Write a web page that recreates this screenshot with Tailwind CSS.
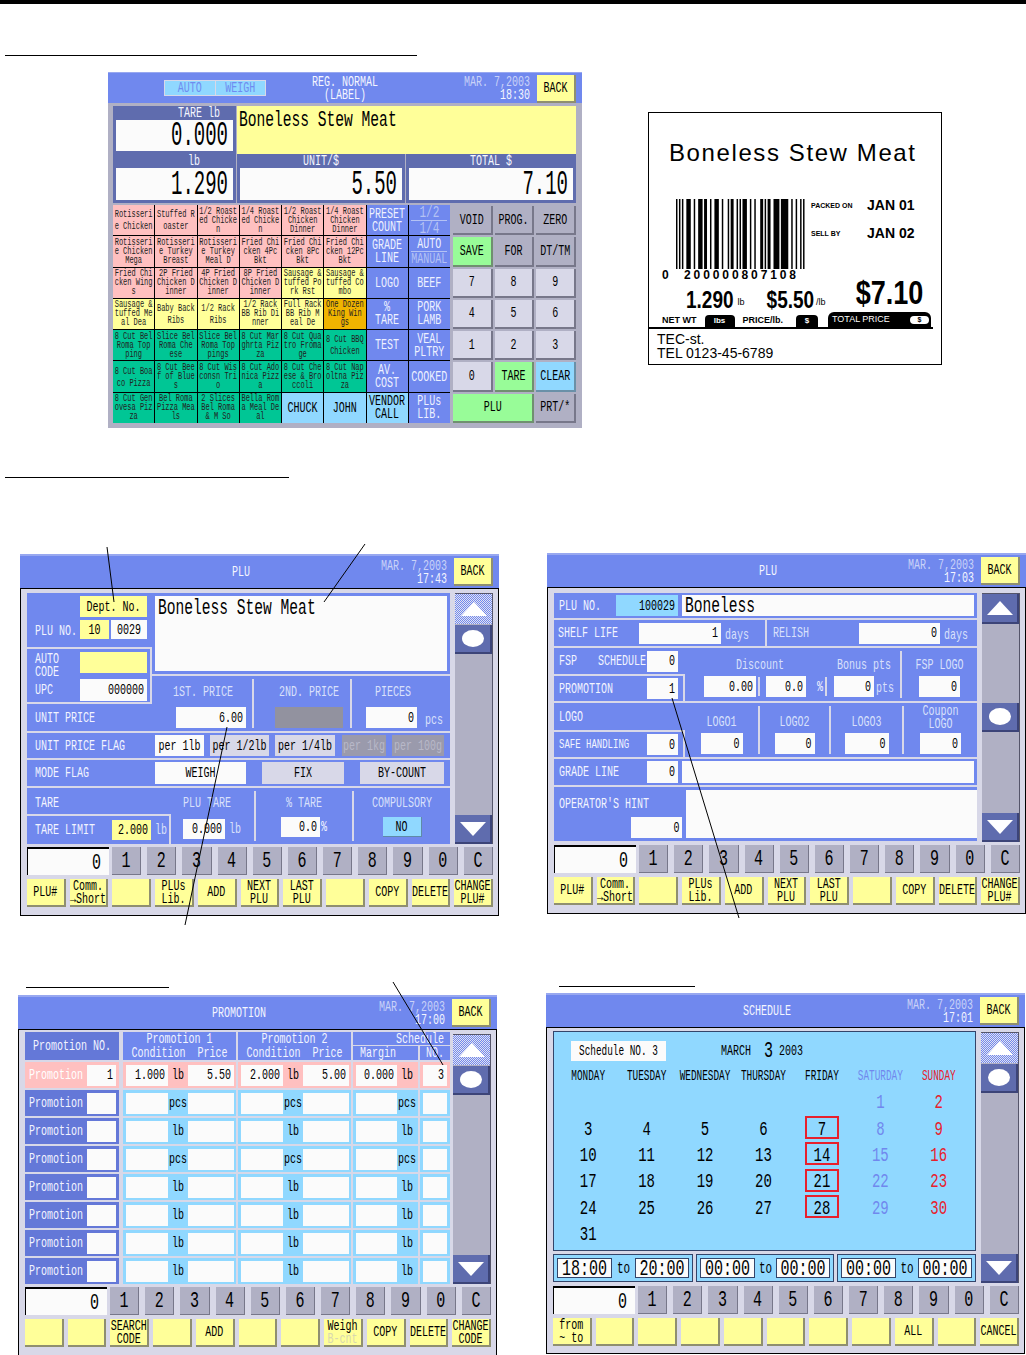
<!DOCTYPE html>
<html lang="en">
<head>
    <meta charset="UTF-8">
    <title>Scale screens</title>
    <script src="https://cdn.jsdelivr.net/npm/@tailwindcss/browser@4"></script>
</head>
<body class="bg-white">
    <div id="page" class="relative w-[1026px] h-[1355px] overflow-hidden bg-white text-black font-['Liberation_Mono',monospace] text-[10px] leading-none">
        <div class="h-1 bg-black"></div>
        <div class="mt-[51px] ml-[5px] w-[412px] h-px bg-black"></div>

        <!-- registration screen + printed label -->
        <div class="mt-4 flex items-start">
            <div id="regScreen" class="ml-[108px] w-[474px] h-[356px] bg-[#b0b0c4]"></div>
            <div id="label" class="ml-[66px] mt-10 w-[294px] h-[253px] border border-black bg-white font-['Liberation_Sans',sans-serif]"></div>
        </div>

        <div class="mt-[49px] ml-[5px] w-[284px] h-px bg-black"></div>

        <div class="mt-[76px] flex items-start">
            <div id="plu1" class="ml-5"></div>
            <div id="plu2" class="ml-[48px] -mt-px"></div>
        </div>

        <div class="mt-[70px] flex items-start">
            <div class="ml-[18px] w-[479px]">
                <div class="mt-px ml-2 w-[143px] h-px bg-black"></div>
                <div id="promo" class="mt-[7px]"></div>
            </div>
            <div class="ml-[49px] w-[478px]">
                <div class="ml-[13px] w-[136px] h-px bg-black"></div>
                <div id="sched" class="mt-[6px]"></div>
            </div>
        </div>

        <!-- leader lines over the screens -->
        <svg class="absolute left-0 top-0 pointer-events-none" width="1026" height="1355" fill="none" stroke="#000" stroke-width="1">
            <path d="M107 547L114 602M365 544L324 602M227 727L185 925M672 698L739 918M393 982L443 1065"/>
        </svg>
    </div>

    <script>
        // text helper: the scale font is tall and narrow, so stretch the mono glyphs
        const L = (s, c = '') => `<span class="inline-block whitespace-pre scale-y-150 translate-y-px ${c}">${s}</span>`;

        const keyYellow = 'bg-[#ffff99] border-[#8f8f70] text-black';
        const keyGray = 'bg-[#b0b0c4] border-[#77778a]';
        const keyLight = 'bg-[#d8d8e8] border-[#77778a]';
        const keyGreen = 'bg-[#98fc98] border-[#708f70]';
        const keyBlue = 'bg-[#90d8ff] border-[#6a90a8]';

        const key = (label, c) => `<div class="flex flex-col items-center justify-center gap-[3px] border-r-2 border-b-2 ${c}">${label.split('|').map(l => L(l)).join('')}</div>`;
        const field = (txt, c) => `<div class="flex items-center justify-end pr-[3px] bg-[#fbfbfb] ${c}">${L(txt)}</div>`;
        const divider = '<div class="w-[2px] self-stretch bg-[#d8d8e8]"></div>';

        const triUp = '<svg width="26" height="14"><polygon points="13,0 26,14 0,14" fill="#fff"/></svg>';
        const triDown = '<svg width="26" height="14"><polygon points="0,0 26,0 13,14" fill="#fff"/></svg>';
        const dot = '<svg width="22" height="17"><ellipse cx="11" cy="8.5" rx="11" ry="8.5" fill="#fff"/></svg>';
        const hatched = 'bg-[repeating-conic-gradient(#7088ee_0_25%,#e4e4f0_0_50%)] bg-[length:2px_2px]';
        const solid = 'bg-[#5f6cae] border-r-2 border-b-2 border-[#3c4478]';

        function scrollbar(upHatched, dotLow) {
            return `<div class="w-[38px] flex flex-col bg-[#b0b0c4] border-t border-r border-[#55556a]">
                <div class="h-[30px] flex items-center justify-center ${upHatched ? hatched : solid}">${triUp}</div>
                ${dotLow ? '<div class="h-[79px]"></div>' : '<div class="h-px"></div>'}
                <div class="h-[29px] flex items-center justify-center ${solid}">${dot}</div>
                <div class="flex-1"></div>
                <div class="h-[29px] flex items-center justify-center ${solid}">${triDown}</div>
            </div>`;
        }

        function numpad() {
            const digits = ['1', '2', '3', '4', '5', '6', '7', '8', '9', '0', 'C'];
            return `<div class="mt-[3px] flex h-[28px]">
                <div class="w-[82px] flex items-center justify-end pr-2 bg-[#fbfbfb] border-l border-t-2 border-black text-[15px]">${L('0', 'scale-y-125')}</div>
                <div class="ml-[3px] w-[381px] grid grid-cols-11 gap-[6px] text-[15px]">
                    ${digits.map(d => `<div class="flex items-center justify-center ${keyGray} border-r border-b">${L(d, 'scale-y-125')}</div>`).join('')}
                </div>
            </div>`;
        }

        function fkeys(labels) {
            return `<div class="mt-1 h-[28px] w-[466px] grid grid-cols-11 gap-1">
                ${labels.map(l => key(l, keyYellow)).join('')}
            </div>`;
        }

        function screen(title, time, main, upHatched, dotLow, labels, h, bodyPad, mainH) {
            return `<div class="w-[479px] ${h} flex flex-col bg-[#d8d8e8] border-b border-l border-r border-black">
                <div class="-ml-px -mr-px h-[35px] shrink-0 flex items-center bg-[#7088ee] border-b border-black border-t-2 border-t-[#98a8f0] text-[#f4f6ff]">
                    <div class="w-[330px] pl-[112px] text-center">${L(title)}</div>
                    <div class="w-[97px] text-right leading-[13px]"><span class="text-[#c9d2f8]">${L('MAR. 7,2003')}</span><br>${L(time)}</div>
                    <div class="ml-[7px] w-[39px] h-[28px]">${key('BACK', keyYellow + ' h-full')}</div>
                </div>
                <div class="pl-[6px] ${bodyPad}">
                    <div class="flex ${mainH}">
                        <div class="w-[423px] shrink-0">${main}</div>
                        <div class="ml-[5px] flex">${scrollbar(upHatched, dotLow)}</div>
                    </div>
                    ${numpad()}
                    ${fkeys(labels)}
                </div>
            </div>`;
        }

        // ---------- registration screen ----------
        const cellBg = {
            p: 'bg-[#ffc0c0]', y: 'bg-[#ffff99]', o: 'bg-[#f0b400]', g: 'bg-[#00c695]'
        };
        const regCells = [
            ['p', 'Rotisseri|e Chicken'], ['p', 'Stuffed R|oaster'], ['p', '1/2 Roast|ed Chicke|n'], ['p', '1/4 Roast|ed Chicke|n'], ['p', '1/2 Roast|Chicken|Dinner'], ['p', '1/4 Roast|Chicken|Dinner'],
            ['p', 'Rotisseri|e Chicken|Mega'], ['p', 'Rotisseri|e Turkey|Breast'], ['p', 'Rotisseri|e Turkey|Meal D'], ['p', 'Fried Chi|cken 4Pc|Bkt'], ['p', 'Fried Chi|cken 8Pc|Bkt'], ['p', 'Fried Chi|cken 12Pc|Bkt'],
            ['p', 'Fried Chi|cken Wing|s'], ['p', '2P Fried|Chicken D|inner'], ['p', '4P Fried|Chicken D|inner'], ['p', '8P Fried|Chicken D|inner'], ['y', 'Sausage &|tuffed Po|rk Rst'], ['y', 'Sausage &|tuffed Co|mbo'],
            ['y', 'Sausage &|tuffed Me|al Dea'], ['y', 'Baby Back|Ribs'], ['y', '1/2 Rack|Ribs'], ['y', '1/2 Rack|BB Rib Di|nner'], ['y', 'Full Rack|BB Rib M|eal De'], ['o', 'One Dozen|King Win|gs'],
            ['g', '8 Cut Bel|Roma Top|ping'], ['g', 'Slice Bel|Roma Che|ese'], ['g', 'Slice Bel|Roma Top|pings'], ['g', '8 Cut Mar|ghrta Piz|za'], ['g', '8 Cut Qua|tro Froma|ge'], ['g', '8 Cut BBQ|Chicken'],
            ['g', '8 Cut Boa|co Pizza'], ['g', '8 Cut Bee|f of Blue|s'], ['g', '8 Cut Wis|consn Tri|o'], ['g', '8 Cut Ado|nica Pizz|a'], ['g', '8 Cut Che|ese & Bro|ccoli'], ['g', '8 Cut Nap|oltna Piz|za'],
            ['g', '8 Cut Gen|ovesa Piz|za'], ['g', 'Bel Roma|Pizza Mea|ls'], ['g', '2 Slices|Bel Roma|& M So'], ['g', 'Bella Rom|a Meal De|al']
        ];
        const sideBlue = [
            ['PRESET|COUNT', '1/2|1/4'], ['GRADE|LINE', 'AUTO|MANUAL'], ['LOGO', 'BEEF'], ['%|TARE', 'PORK|LAMB'],
            ['TEST', 'VEAL|PLTRY'], ['AV.|COST', 'COOKED'], ['VENDOR|CALL', 'PLUs|LIB.']
        ];

        function regCell([bg, text]) {
            const lines = text.split('|');
            const pitch = lines.length === 3 ? 'leading-[9px]' : 'leading-[12px]';
            return `<div class="${cellBg[bg]} ${pitch} flex flex-col items-center justify-center text-[7px] text-[#222] overflow-hidden">${lines.map(l => `<span class="inline-block whitespace-pre scale-y-150">${l}</span>`).join('')}</div>`;
        }
        function blueCell(text, dim) {
            const lines = text.split('|');
            const color = dim ? 'text-[#b4c2f4]' : 'text-[#eef1ff]';
            return `<div class="bg-[#7088ee] flex flex-col items-center justify-center gap-[3px] ${color}">${lines.map(l => L(l)).join('')}</div>`;
        }
        function regGrid() {
            let html = '';
            for (let r = 0; r < 7; r++) {
                const cells = regCells.slice(r * 6, r * 6 + 6);
                html += cells.map(regCell).join('');
                if (r === 6) {
                    html += `<div class="bg-[#90d8ff] flex items-center justify-center">${L('CHUCK')}</div><div class="bg-[#90d8ff] flex items-center justify-center">${L('JOHN')}</div>`;
                    html += `<div class="bg-[#90d8ff] flex flex-col items-center justify-center gap-[3px]">${L('VENDOR')}${L('CALL')}</div>`;
                    html += blueCell(sideBlue[r][1]);
                } else {
                    html += blueCell(sideBlue[r][0]);
                    if (r === 0) {
                        html += `<div class="bg-[#7088ee] flex flex-col items-center justify-center text-[#b4c2f4] text-[11px]">${L('1/2', 'scale-y-125')}<div class="w-9 h-px bg-[#b4c2f4] my-[2px]"></div>${L('1/4', 'scale-y-125')}</div>`;
                    } else if (r === 1) {
                        html += `<div class="bg-[#7088ee] flex flex-col items-center justify-center text-[#eef1ff]">${L('AUTO')}<div class="w-9 h-px bg-[#b4c2f4] my-[2px]"></div>${L('MANUAL', 'text-[#b4c2f4]')}</div>`;
                    } else {
                        html += blueCell(sideBlue[r][1]);
                    }
                }
            }
            return html;
        }

        function bigBox(title, value, w, titleClass) {
            return `<div class="${w} flex flex-col bg-[#5f6cae] px-[3px] pb-[3px]">
                <div class="h-[14px] shrink-0 flex items-center text-[#f4f6ff] text-[10px] ${titleClass}">${L(title, 'scale-y-125')}</div>
                <div class="flex-1 bg-[#fbfbfb] flex items-center justify-end pr-[5px] text-[19px]">${L(value, 'scale-y-[1.85]')}</div>
            </div>`;
        }

        function renderReg() {
            const keys = [
                ['VOID', keyGray], ['PROG.', keyGray], ['ZERO', keyGray],
                ['SAVE', keyGreen], ['FOR', keyGray], ['DT/TM', keyGray],
                ['7', keyLight], ['8', keyLight], ['9', keyLight],
                ['4', keyLight], ['5', keyLight], ['6', keyLight],
                ['1', keyLight], ['2', keyLight], ['3', keyLight],
                ['0', keyLight], ['TARE', keyGreen], ['CLEAR', keyBlue]
            ];
            document.getElementById('regScreen').innerHTML = `
                <div class="h-[31px] flex items-center bg-[#7088ee] border-t border-[#98a8f0] pl-14 text-[#f4f6ff]">
                    <div class="w-[102px] h-4 flex text-[#6f8cf0] bg-[#90d8ff] border border-[#d8d8e8]">
                        <div class="flex-1 flex items-center justify-center border-r border-[#d8d8e8]">${L('AUTO')}</div>
                        <div class="flex-1 flex items-center justify-center">${L('WEIGH')}</div>
                    </div>
                    <div class="w-[158px] text-center leading-[13px]">${L('REG. NORMAL')}<br>${L('(LABEL)')}</div>
                    <div class="w-[106px] text-right leading-[13px]"><span class="text-[#c9d2f8]">${L('MAR. 7,2003')}</span><br>${L('18:30')}</div>
                    <div class="ml-[7px] w-[39px] h-[28px] mt-[2px]">${key('BACK', keyYellow + ' h-full')}</div>
                </div>
                <div class="pl-[5px] pt-[3px]">
                    <div class="flex h-[48px]">
                        ${bigBox('TARE lb', '0.000', 'w-[123px]', 'pl-[62px]')}
                        <div class="ml-px w-[339px] bg-[#ffff99] pl-[2px] pt-[6px] text-[14.6px] h-[48px]">${L('Boneless Stew Meat', 'scale-y-[1.45]')}</div>
                    </div>
                    <div class="flex h-[49px] gap-px">
                        ${bigBox('lb', '1.290', 'w-[123px]', 'pl-[72px]')}
                        ${bigBox('UNIT/$', '5.50', 'w-[168px]', 'justify-center')}
                        ${bigBox('TOTAL $', '7.10', 'w-[170px]', 'justify-center')}
                    </div>
                    <div class="mt-[2px] flex h-[218px]">
                        <div class="w-[337px] grid grid-cols-8 grid-rows-7 gap-px bg-black">${regGrid()}</div>
                        <div class="ml-[3px] w-[123px] pt-px grid grid-cols-3 grid-rows-7 gap-x-[2px] gap-y-[2px]">
                            ${keys.map(k => key(k[0], k[1])).join('')}
                            <div class="col-span-2 grid">${key('PLU', keyGreen)}</div>
                            ${key('PRT/*', keyGray)}
                        </div>
                    </div>
                </div>`;
        }

        // ---------- printed label ----------
        function renderLabel() {
            const bars = [1,1,1,1,1,2,3,2,1,2,3,1,2,2,1,2,3,2,1,3,1,1,2,2,1,1,1,1,3,2,1,2,1,3,2,1,1,1,2,2,4,1,5,2,1,2,1,2,1,1,1,1];
            let x = 0, rects = '';
            for (let i = 0; i < bars.length; i += 2) {
                rects += `<rect x="${x}" y="0" width="${bars[i]}" height="70"/>`;
                x += bars[i] + bars[i + 1];
            }
            document.getElementById('label').innerHTML = `
                <div class="pt-[28px] pl-5 text-[24px] leading-[24px] tracking-[1.6px] whitespace-nowrap">Boneless Stew Meat</div>
                <div class="mt-[34px] flex">
                    <div class="ml-[27px] w-[130px]">
                        <svg width="130" height="70" viewBox="0 0 ${x} 70" preserveAspectRatio="none" fill="#000">${rects}</svg>
                    </div>
                    <div class="ml-[5px] w-[110px] flex flex-col gap-4">
                        <div class="flex items-center h-3"><span class="w-[56px] text-[7px] font-bold whitespace-nowrap">PACKED ON</span><span class="text-[14px] font-bold whitespace-nowrap">JAN 01</span></div>
                        <div class="flex items-center h-3"><span class="w-[56px] text-[7px] font-bold whitespace-nowrap">SELL BY</span><span class="text-[14px] font-bold whitespace-nowrap">JAN 02</span></div>
                    </div>
                </div>
                <div class="ml-[13px] text-[12px] font-bold tracking-[2.9px] leading-3 whitespace-pre">0  200000807108</div>
                <div class="flex items-end h-[34px] -mt-[3px]">
                    <span class="ml-[37px] text-[19px] font-bold leading-[24px] scale-y-125 inline-block">1.290</span>
                    <span class="ml-1 mb-[5px] text-[9px] leading-none">lb</span>
                    <span class="ml-[22px] text-[19px] font-bold leading-[24px] scale-y-125 inline-block">$5.50</span>
                    <span class="ml-[2px] mb-[5px] text-[9px] leading-none">/lb</span>
                    <span class="ml-[30px] text-[27px] font-bold leading-[38px] scale-y-125 inline-block">$7.10</span>
                </div>
                <div class="flex items-end h-[15px] ml-[13px]">
                    <span class="text-[9px] font-bold mb-[2px] whitespace-nowrap">NET WT</span>
                    <span class="ml-2 w-[30px] h-3 rounded-t bg-black text-white text-[8px] font-bold text-center leading-3">lbs</span>
                    <span class="ml-2 text-[9px] font-bold mb-[2px] whitespace-nowrap">PRICE/lb.</span>
                    <span class="ml-[13px] w-[22px] h-3 rounded-t bg-black text-white text-[8px] font-bold text-center leading-3">$</span>
                    <span class="ml-[10px] w-[103px] h-[15px] rounded-t-md bg-black text-white text-[9px] pl-1 flex items-center whitespace-nowrap">TOTAL PRICE<span class="ml-5 w-[19px] h-2 rounded-sm bg-white text-black text-[7px] font-bold text-center leading-2">$</span></span>
                </div>
                <div class="w-[284px] h-[2px] bg-black"></div>
                <div class="mt-[3px] pl-[8px] text-[14px] leading-[14px]">TEC-st.<br>TEL 0123-45-6789</div>`;
        }

        // ---------- PLU page 1 ----------
        const blue = 'bg-[#7088ee]';
        const panelText = 'text-[#f2f4ff]';
        function renderPlu1() {
            const main = `<div class="flex flex-col gap-[2px] ${panelText}">
                <div class="flex h-[138px]">
                    <div class="w-[125px] flex flex-col ${blue}">
                        <div class="h-[54px] flex pt-[3px] pl-2">
                            <div class="w-[45px] self-end pb-[11px]">${L('PLU NO.')}</div>
                            <div class="w-[67px] text-black">
                                <div class="h-[21px] bg-[#ffff99] flex items-center justify-center">${L('Dept. No.')}</div>
                                <div class="mt-[3px] flex gap-[2px]">
                                    <div class="w-[29px] h-[19px] bg-[#ffff99] flex items-center justify-center">${L('10')}</div>
                                    <div class="w-9 h-[19px] bg-[#fbfbfb] flex items-center justify-center">${L('0029')}</div>
                                </div>
                            </div>
                        </div>
                        <div class="h-[57px] flex border-y-2 border-r-2 border-[#d8d8e8] pl-2 pt-[3px]">
                            <div class="w-[45px] flex flex-col">
                                <div class="leading-[13px] h-[31px]">${L('AUTO')}<br>${L('CODE')}</div>
                                <div class="pt-[2px]">${L('UPC')}</div>
                            </div>
                            <div class="w-[67px]">
                                <div class="h-[21px] bg-[#ffff99]"></div>
                                <div class="mt-[6px] h-[22px] bg-[#fbfbfb] text-black flex items-center justify-end pr-[3px]">${L('000000')}</div>
                            </div>
                        </div>
                        <div class="flex-1 flex items-center pl-2">${L('UNIT PRICE')}</div>
                    </div>
                    <div class="w-[298px] flex flex-col bg-[#d8d8e8]">
                        <div class="h-[82px] p-[3px] ${blue}">
                            <div class="h-full bg-[#fbfbfb] text-black pl-[3px] pt-1 text-[14.6px]">${L('Boneless Stew Meat', 'scale-y-[1.45]')}</div>
                        </div>
                        <div class="mt-[2px] flex-1 flex ${blue} py-[3px]">
                            <div class="w-[100px] pl-[24px] flex flex-col">
                                <div class="h-[28px] pb-[3px] -ml-[8px] flex items-center justify-center w-[70px]">${L('1ST. PRICE', 'text-[#d9e0fb]')}</div>
                                ${field('6.00', 'w-[70px] h-[21px] text-black')}
                            </div>
                            ${divider}
                            <div class="w-[96px] pl-[21px] flex flex-col">
                                <div class="h-[28px] pb-[3px] flex items-center justify-center w-[68px]">${L('2ND. PRICE', 'text-[#d9e0fb]')}</div>
                                <div class="w-[68px] h-[21px] bg-[#92929f]"></div>
                            </div>
                            ${divider}
                            <div class="flex-1 pl-[14px] flex flex-col">
                                <div class="h-[28px] pb-[3px] flex items-center justify-center w-[51px] pl-[3px]">${L('PIECES', 'text-[#d9e0fb]')}</div>
                                <div class="flex items-end">
                                    ${field('0', 'w-[51px] h-[21px] text-black')}
                                    <span class="ml-2 mb-[3px]">${L('pcs', 'text-[#d9e0fb]')}</span>
                                </div>
                            </div>
                        </div>
                    </div>
                </div>
                <div class="h-[25px] flex items-center pl-2 ${blue}">
                    <div class="w-[120px]">${L('UNIT PRICE FLAG')}</div>
                    <div class="flex text-black h-[21px]">
                        <div class="w-[49px] bg-[#fbfbfb] flex items-center justify-center">${L('per 1lb')}</div>
                        <div class="ml-[6px] w-[59px] bg-[#d8d8e8] flex items-center justify-center">${L('per 1/2lb')}</div>
                        <div class="ml-[6px] w-[60px] bg-[#d8d8e8] flex items-center justify-center">${L('per 1/4lb')}</div>
                        <div class="ml-[7px] w-[44px] bg-[#9a9aac] text-[#b8b8c8] flex items-center justify-center">${L('per 1kg')}</div>
                        <div class="ml-[6px] w-[52px] bg-[#9a9aac] text-[#b8b8c8] flex items-center justify-center">${L('per 100g')}</div>
                    </div>
                </div>
                <div class="h-[26px] flex items-center pl-2 ${blue}">
                    <div class="w-[120px]">${L('MODE FLAG')}</div>
                    <div class="flex text-black h-[22px]">
                        <div class="w-[91px] bg-[#fbfbfb] flex items-center justify-center">${L('WEIGH')}</div>
                        <div class="ml-[7px]">${divider}</div>
                        <div class="ml-[7px] w-[82px] bg-[#d8d8e8] flex items-center justify-center">${L('FIX')}</div>
                        <div class="ml-[7px]">${divider}</div>
                        <div class="ml-[7px] w-[84px] bg-[#d8d8e8] flex items-center justify-center">${L('BY-COUNT')}</div>
                    </div>
                </div>
                <div class="h-[56px] flex ${blue}">
                    <div class="w-[227px] flex flex-col">
                        <div class="h-[26px] pt-[3px] flex items-center pl-2">
                            <div class="w-[148px]">${L('TARE')}</div>
                            ${L('PLU TARE', 'text-[#d9e0fb]')}
                        </div>
                        <div class="flex-1 flex items-center">
                            <div class="w-[144px] h-full flex items-center pl-2 border-t-2 border-r-2 border-[#d8d8e8]">
                                <div class="w-[77px]">${L('TARE LIMIT')}</div>
                                <div class="w-[39px] h-5 bg-[#ffff99] text-black flex items-center justify-end pr-[3px]">${L('2.000')}</div>
                                <span class="ml-1 text-[#d9e0fb]">${L('lb')}</span>
                            </div>
                            ${field('0.000', 'ml-3 w-[42px] h-5 text-black')}
                            <span class="ml-1 text-[#d9e0fb]">${L('lb')}</span>
                        </div>
                    </div>
                    <div class="my-[3px] flex">${divider}</div>
                    <div class="w-[96px] flex flex-col items-center">
                        <div class="h-[26px] pt-[3px] flex items-center">${L('% TARE', 'text-[#d9e0fb]')}</div>
                        <div class="flex items-center pt-[3px]">
                            ${field('0.0', 'w-[39px] h-5 text-black')}
                            <span class="ml-[1px]">${L('%')}</span>
                        </div>
                    </div>
                    <div class="my-[3px] flex">${divider}</div>
                    <div class="flex-1 flex flex-col items-center">
                        <div class="h-[26px] pt-[3px] flex items-center">${L('COMPULSORY', 'text-[#d9e0fb]')}</div>
                        <div class="mt-[3px] w-[39px] h-5 bg-[#90d8ff] text-black flex items-center justify-center border-r border-b border-[#5f8aa8]">${L('NO')}</div>
                    </div>
                </div>
            </div>`;
            document.getElementById('plu1').innerHTML = screen('PLU', '17:43', main, true, false,
                ['PLU#', 'Comm.|→Short', '', 'PLUs|Lib.', 'ADD', 'NEXT|PLU', 'LAST|PLU', '', 'COPY', 'DELETE', 'CHANGE|PLU#'], 'h-[362px]', 'pt-1', 'h-[251px]');
        }

        // ---------- PLU page 2 ----------
        function renderPlu2() {
            const f = (txt, c) => field(txt, c + ' text-black');
            const bar = '<div class="w-[2px] h-[19px] bg-[#d8d8e8]"></div>';
            const main = `<div class="flex flex-col gap-[2px] ${panelText}">
                <div class="h-[25px] flex items-center pl-[5px] ${blue}">
                    <div class="w-[57px]">${L('PLU NO.')}</div>
                    <div class="w-[62px] h-[21px] bg-[#90d8ff] text-black flex items-center justify-end pr-[3px]">${L('100029')}</div>
                    <div class="ml-1 w-[292px] h-[21px] bg-[#fbfbfb] text-black pl-[3px] pt-[3px] text-[14.6px]">${L('Boneless', 'scale-y-[1.45]')}</div>
                </div>
                <div class="h-[26px] flex gap-[2px]">
                    <div class="w-[211px] flex items-center pl-1 ${blue}">
                        <div class="w-[81px]">${L('SHELF LIFE')}</div>
                        ${f('1', 'w-[82px] h-[21px]')}
                        <span class="ml-[4px] pt-1">${L('days', 'text-[#d9e0fb]')}</span>
                    </div>
                    <div class="flex-1 flex items-center pl-[6px] ${blue}">
                        <div class="w-[80px]">${L('RELISH', 'text-[#d9e0fb]')}</div>
                        <div class="ml-[6px]">${f('0', 'w-[81px] h-[21px]')}</div>
                        <span class="ml-[4px] pt-1">${L('days', 'text-[#d9e0fb]')}</span>
                    </div>
                </div>
                <div class="h-[53px] flex ${blue}">
                    <div class="w-[131px] flex flex-col">
                        <div class="h-[26px] flex items-center pl-[5px]">
                            <div class="w-[39px]">${L('FSP')}</div>
                            <div class="w-[49px] overflow-visible">${L('SCHEDULE')}</div>
                            ${f('0', 'w-[31px] h-[21px]')}
                        </div>
                        <div class="flex-1 flex items-center pl-[5px] border-t-2 border-r-2 border-[#d8d8e8]">
                            <div class="w-[88px]">${L('PROMOTION')}</div>
                            ${f('1', 'w-[31px] h-[21px]')}
                        </div>
                    </div>
                    <div class="flex-1 flex">
                        <div class="w-[215px] flex flex-col">
                            <div class="h-[25px] flex items-end pb-[3px] text-[#d9e0fb]">
                                <div class="w-[150px] text-center">${L('Discount')}</div>
                                <div class="w-[58px] flex justify-center">${L('Bonus pts')}</div>
                            </div>
                            <div class="flex items-center mt-[3px]">
                                ${f('0.00', 'ml-[19px] w-[52px] h-[21px]')}
                                <div class="ml-[2px]">${bar}</div>
                                ${f('0.0', 'ml-[6px] w-10 h-[21px]')}
                                <div class="ml-[11px]">${L('%')}</div>
                                <div class="ml-[2px]">${bar}</div>
                                ${f('0', 'ml-[7px] w-10 h-[21px]')}
                                <div class="ml-[2px] pt-[2px]">${L('pts', 'text-[#d9e0fb]')}</div>
                            </div>
                        </div>
                        <div class="my-[3px] flex">${divider}</div>
                        <div class="flex-1 flex flex-col items-center">
                            <div class="h-[25px] flex items-end pb-[3px]">${L('FSP LOGO', 'text-[#d9e0fb]')}</div>
                            <div class="mt-[3px]">${f('0', 'w-[41px] h-[21px]')}</div>
                        </div>
                    </div>
                </div>
                <div class="h-[54px] flex ${blue}">
                    <div class="w-[131px] flex flex-col">
                        <div class="h-[27px] flex items-center pl-[5px]">${L('LOGO')}</div>
                        <div class="flex-1 flex items-center pl-[5px] border-t-2 border-r-2 border-[#d8d8e8]">
                            <div class="w-[88px] text-[9px]">${L('SAFE HANDLING')}</div>
                            ${f('0', 'w-[31px] h-[21px]')}
                        </div>
                    </div>
                    <div class="flex-1 flex">
                        <div class="w-[73px] flex flex-col items-center justify-end pb-[3px] gap-[6px]">${L('LOGO1', 'text-[#d9e0fb]')}${f('0', 'w-[42px] h-[21px]')}</div>
                        <div class="my-[3px] flex">${divider}</div>
                        <div class="w-[69px] flex flex-col items-center justify-end pb-[3px] gap-[6px]">${L('LOGO2', 'text-[#d9e0fb]')}${f('0', 'w-10 h-[21px]')}</div>
                        <div class="my-[3px] flex">${divider}</div>
                        <div class="w-[71px] flex flex-col items-center justify-end pb-[3px] gap-[6px]">${L('LOGO3', 'text-[#d9e0fb]')}${f('0', 'w-11 h-[21px]')}</div>
                        <div class="my-[3px] flex">${divider}</div>
                        <div class="flex-1 flex flex-col items-center justify-end pb-[3px] text-[#d9e0fb]">
                            <div class="leading-[13px] text-center mb-[3px]">${L('Coupon')}<br>${L('LOGO')}</div>
                            ${f('0', 'w-[41px] h-[21px]')}
                        </div>
                    </div>
                </div>
                <div class="h-[26px] flex items-center pl-[5px] ${blue}">
                    <div class="w-[88px]">${L('GRADE LINE')}</div>
                    ${f('0', 'w-[31px] h-[22px]')}
                    <div class="ml-1 w-[292px] h-[22px] bg-[#fbfbfb]"></div>
                </div>
                <div class="h-[54px] flex pl-[5px] py-[3px] ${blue}">
                    <div class="w-[124px] flex flex-col justify-between">
                        <div class="pt-[9px]">${L("OPERATOR'S HINT")}</div>
                        <div class="flex justify-end">${f('0', 'w-[51px] h-[21px]')}</div>
                    </div>
                    <div class="ml-1 w-[292px] bg-[#fbfbfb]"></div>
                </div>
            </div>`;
            document.getElementById('plu2').innerHTML = screen('PLU', '17:03', main, false, true,
                ['PLU#', 'Comm.|→Short', '', 'PLUs|Lib.', 'ADD', 'NEXT|PLU', 'LAST|PLU', '', 'COPY', 'DELETE', 'CHANGE|PLU#'], 'h-[361px]', 'pt-[5px]', 'h-[249px]');
        }

        // ---------- promotion ----------
        function promoRow(i, no, v) {
            const unit = (i === 1 || i === 3) ? 'pcs' : 'lb';
            const first = i === 0;
            const cell = first ? 'bg-[#ffc0c0]' : 'bg-[#90d8ff]';
            const u = first ? 'lb' : unit;
            return `<div class="flex h-[26px]">
                <div class="w-[94px] flex items-center pl-[4px] ${first ? 'bg-[#ffc0c0] text-[#fff]' : 'bg-[#6478d8] text-[#f2f4ff]'}">
                    <div class="w-[58px]">${L('Promotion')}</div>
                    ${field(no, 'w-[29px] h-[21px] text-black')}
                </div>
                <div class="ml-[4px] w-[113px] flex items-center pl-[3px] ${cell}">
                    ${field(v[0], 'w-[42px] h-[21px]')}
                    <div class="w-[20px] text-center">${L(u)}</div>
                    ${field(v[1], 'w-[46px] h-[21px]')}
                </div>
                <div class="ml-[2px] w-[113px] flex items-center pl-[3px] ${cell}">
                    ${field(v[2], 'w-[42px] h-[21px]')}
                    <div class="w-[20px] text-center">${L(u)}</div>
                    ${field(v[3], 'w-[46px] h-[21px]')}
                </div>
                <div class="ml-[2px] w-[65px] flex items-center pl-[3px] ${cell}">
                    ${field(v[4], 'w-[41px] h-[21px]')}
                    <div class="w-[20px] text-center">${L(u)}</div>
                </div>
                <div class="ml-[2px] w-[30px] flex items-center justify-center ${cell}">
                    ${field(v[5], 'w-6 h-[21px]')}
                </div>
            </div>`;
        }
        function renderPromo() {
            const rows = [promoRow(0, '1', ['1.000', '5.50', '2.000', '5.00', '0.000', '3'])];
            for (let i = 1; i < 8; i++) rows.push(promoRow(i, '', ['', '', '', '', '', '']));
            const main = `<div class="flex flex-col gap-[2px] -mt-[2px] w-[425px]">
                <div class="flex h-7 text-[#f2f4ff]">
                    <div class="w-[94px] bg-[#6478d8] flex items-center justify-center">${L('Promotion NO.')}</div>
                    <div class="ml-[4px] w-[113px] bg-[#7088ee] flex flex-col items-center justify-center gap-[4px]">
                        ${L('Promotion 1')}${L('Condition  Price')}
                    </div>
                    <div class="ml-[2px] w-[113px] bg-[#7088ee] flex flex-col items-center justify-center gap-[4px]">
                        ${L('Promotion 2')}${L('Condition  Price')}
                    </div>
                    <div class="ml-[2px] w-[97px] flex flex-col">
                        <div class="h-[13px] bg-[#7088ee] flex items-center justify-end pr-[6px]">${L('Schedule')}</div>
                        <div class="mt-[1px] flex-1 flex gap-[2px]">
                            <div class="w-[65px] bg-[#7088ee] flex items-center pl-[7px]">${L('Margin')}</div>
                            <div class="flex-1 bg-[#7088ee] flex items-center justify-center">${L('NO.')}</div>
                        </div>
                    </div>
                </div>
                ${rows.join('')}
            </div>`;
            document.getElementById('promo').innerHTML = screen('PROMOTION', '17:00', main, true, false,
                ['', '', 'SEARCH|CODE', '', 'ADD', '', '', 'Weigh|<span class="text-[#d8d8b0]">B-cnt</span>', 'COPY', 'DELETE', 'CHANGE|CODE'], 'h-[362px]', 'pt-1', 'h-[250px]');
        }

        // ---------- schedule ----------
        function renderSched() {
            const days = ['MONDAY', 'TUESDAY', 'WEDNESDAY', 'THURSDAY', 'FRIDAY', 'SATURDAY', 'SUNDAY'];
            const dayColor = ['', '', '', '', '', 'text-[#7088ee]', 'text-[#e8202c]'];
            const cal = ['', '', '', '', '', '1', '2', '3', '4', '5', '6', '7', '8', '9', '10', '11', '12', '13', '14', '15', '16', '17', '18', '19', '20', '21', '22', '23', '24', '25', '26', '27', '28', '29', '30', '31'];
            const time = (a, b, w) => `<div class="${w} h-full bg-[#90d8ff] border border-[#33446a] flex items-center justify-between px-[3px] text-[15px]">
                <div class="w-[55px] h-5 bg-[#fbfbfb] border border-[#33446a] flex items-center justify-center">${L(a, 'scale-y-125')}</div>
                <span class="text-[11px]">${L('to', 'scale-y-125')}</span>
                <div class="w-[54px] h-5 bg-[#fbfbfb] border border-[#33446a] flex items-center justify-center">${L(b, 'scale-y-125')}</div>
            </div>`;
            const main = `<div class="flex flex-col h-full -mt-px">
                <div class="h-[220px] bg-[#90d8ff] border border-[#33446a] pl-[5px]">
                    <div class="flex items-center h-[37px]">
                        <div class="ml-3 w-[95px] h-5 bg-[#fbfbfb] flex items-center justify-center text-[9.4px]">${L('Schedule NO. 3')}</div>
                        <div class="ml-[55px]">${L('MARCH')}</div>
                        <div class="ml-[13px] text-[15px]">${L('3')}</div>
                        <div class="ml-[6px]">${L('2003')}</div>
                    </div>
                    <div class="w-[409px] grid grid-cols-7 h-[15px] -mt-px items-center text-center text-[9.4px]">
                        ${days.map((d, i) => `<div class="whitespace-nowrap ${dayColor[i]}">${L(d)}</div>`).join('')}
                    </div>
                    <div class="mt-[5px] w-[409px] grid grid-cols-7 auto-rows-[26.4px] text-[14px] text-center">
                        ${cal.map((d, i) => {
                            const col = i % 7;
                            const color = col === 5 ? 'text-[#7088ee]' : col === 6 ? 'text-[#e8202c]' : '';
                            const box = col === 4 && d ? 'w-[34px] h-[23px] border-2 border-[#e8202c]' : '';
                            return `<div class="flex items-center justify-center ${color}"><div class="flex items-center justify-center ${box}">${L(d)}</div></div>`;
                        }).join('')}
                    </div>
                </div>
                <div class="mt-[3px] h-[28px] flex gap-[3px]">
                    ${time('18:00', '20:00', 'w-[140px]')}
                    ${time('00:00', '00:00', 'w-[138px]')}
                    ${time('00:00', '00:00', 'w-[139px]')}
                </div>
            </div>`;
            document.getElementById('sched').innerHTML = screen('SCHEDULE', '17:01', main, true, false,
                ['from|~ to', '', '', '', '', '', '', '', 'ALL', '', 'CANCEL'], 'h-[361px]', 'pt-1', 'h-[251px]');
        }

        document.addEventListener('DOMContentLoaded', () => {
            renderReg();
            renderLabel();
            renderPlu1();
            renderPlu2();
            renderPromo();
            renderSched();
        });
    </script>
</body>
</html>
